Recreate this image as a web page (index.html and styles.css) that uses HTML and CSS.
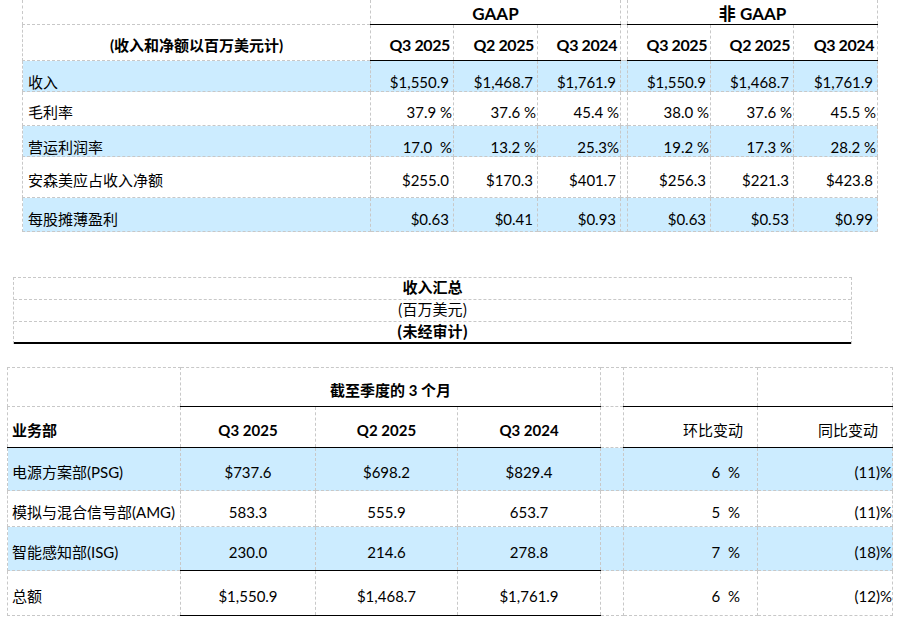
FILE: index.html
```html
<!DOCTYPE html>
<html lang="zh-CN">
<head>
<meta charset="utf-8">
<title>财务摘要</title>
<link rel="stylesheet" href="styles.css">
</head>
<body>
<table class="fin">
  <colgroup>
    <col class="w348"><col class="w83"><col class="w84"><col class="w83"><col class="w7"><col class="w83"><col class="w83"><col class="w84">
  </colgroup>
  <tr class="fr-top">
    <td class="lbl"></td>
    <td class="grp" colspan="3">GAAP</td>
    <td class="gap"></td>
    <td class="grp" colspan="3">非 GAAP</td>
  </tr>
  <tr class="fr-head">
    <td class="hlabel">(收入和净额以百万美元计)</td>
    <td class="qh">Q3 2025</td><td class="qh">Q2 2025</td><td class="qh">Q3 2024</td>
    <td class="gap"></td>
    <td class="qh">Q3 2025</td><td class="qh">Q2 2025</td><td class="qh">Q3 2024</td>
  </tr>
  <tr class="fr-1 blue">
    <td class="lbl">收入</td>
    <td>$1,550.9</td><td>$1,468.7</td><td>$1,761.9</td>
    <td class="gap"></td>
    <td>$1,550.9</td><td>$1,468.7</td><td>$1,761.9</td>
  </tr>
  <tr class="fr-2">
    <td class="lbl">毛利率</td>
    <td class="pct">37.9 %</td><td class="pct">37.6 %</td><td class="pct">45.4 %</td>
    <td class="gap"></td>
    <td class="pct">38.0 %</td><td class="pct">37.6 %</td><td class="pct">45.5 %</td>
  </tr>
  <tr class="fr-3 blue">
    <td class="lbl">营运利润率</td>
    <td class="pct">17.0  %</td><td class="pct">13.2 %</td><td class="pct">25.3%</td>
    <td class="gap"></td>
    <td class="pct">19.2 %</td><td class="pct">17.3 %</td><td class="pct">28.2 %</td>
  </tr>
  <tr class="fr-4">
    <td class="lbl">安森美应占收入净额</td>
    <td>$255.0</td><td>$170.3</td><td>$401.7</td>
    <td class="gap"></td>
    <td>$256.3</td><td>$221.3</td><td>$423.8</td>
  </tr>
  <tr class="fr-5 blue">
    <td class="lbl">每股摊薄盈利</td>
    <td>$0.63</td><td>$0.41</td><td>$0.93</td>
    <td class="gap"></td>
    <td>$0.63</td><td>$0.53</td><td>$0.99</td>
  </tr>
</table>

<div class="summary">
  <div class="sum-row bold">收入汇总</div>
  <div class="sum-row">(百万美元)</div>
  <div class="sum-row bold last">(未经审计)</div>
</div>

<table class="seg">
  <colgroup>
    <col class="w173"><col class="w135"><col class="w142"><col class="w143"><col class="w23"><col class="w134"><col class="w135">
  </colgroup>
  <tr class="sr-a">
    <td class="slbl"></td>
    <td class="period" colspan="3">截至季度的 3 个月</td>
    <td class="gap"></td>
    <td class="chg underline"></td>
    <td class="chg underline"></td>
  </tr>
  <tr class="sr-b">
    <td class="slbl bold underline">业务部</td>
    <td class="qc bold underline">Q3 2025</td>
    <td class="qc bold underline">Q2 2025</td>
    <td class="qc bold underline">Q3 2024</td>
    <td class="gap"></td>
    <td class="chg chgh underline">环比变动</td>
    <td class="chg chgh underline">同比变动</td>
  </tr>
  <tr class="sr-1 blue">
    <td class="slbl">电源方案部(PSG)</td>
    <td class="qc">$737.6</td><td class="qc">$698.2</td><td class="qc">$829.4</td>
    <td class="gap"></td>
    <td class="chg">6  %</td><td class="chg yoy">(11)%</td>
  </tr>
  <tr class="sr-2">
    <td class="slbl">模拟与混合信号部(AMG)</td>
    <td class="qc">583.3</td><td class="qc">555.9</td><td class="qc">653.7</td>
    <td class="gap"></td>
    <td class="chg">5  %</td><td class="chg yoy">(11)%</td>
  </tr>
  <tr class="sr-3 blue">
    <td class="slbl">智能感知部(ISG)</td>
    <td class="qc">230.0</td><td class="qc">214.6</td><td class="qc">278.8</td>
    <td class="gap"></td>
    <td class="chg">7  %</td><td class="chg yoy">(18)%</td>
  </tr>
  <tr class="sr-4">
    <td class="slbl">总额</td>
    <td class="qc total">$1,550.9</td><td class="qc total">$1,468.7</td><td class="qc total">$1,761.9</td>
    <td class="gap"></td>
    <td class="chg">6  %</td><td class="chg yoy">(12)%</td>
  </tr>
</table>
</body>
</html>
```
FILE: styles.css
```css
body {
  margin: 0;
  background: #fff;
  color: #000;
  font-family: Lato, "Noto Sans CJK SC", sans-serif;
  font-size: 15px;
}

table {
  border-collapse: collapse;
  table-layout: fixed;
}

td {
  border: 1px dashed #c8c8c8;
  padding: 0 4px;
  line-height: 18px;
  white-space: pre;
  overflow: visible;
}

.blue td { background: #ccecff; }
.bold { font-weight: bold; }

/* column widths */
.w348 { width: 348px; }
.w83 { width: 83px; }
.w84 { width: 84px; }
.w7 { width: 7px; }
.w173 { width: 173px; }
.w135 { width: 135px; }
.w142 { width: 142px; }
.w143 { width: 143px; }
.w23 { width: 23px; }
.w134 { width: 134px; }

/* ---------- top financial table ---------- */
.fin {
  width: 855px;
  margin-left: 22px;
}

.fin td {
  text-align: right;
  vertical-align: bottom;
}

.fin .gap { padding: 0; }
.fin .lbl { text-align: left; padding-left: 5px; }
.fin .pct { padding-right: 1px; }

.fr-top td { border-top: none; height: 23px; padding-bottom: 1px; }
.fr-top .grp {
  text-align: center;
  font-weight: bold;
  font-size: 17px;
  border-bottom: 1px solid #000;
}

.fr-head td { height: 29px; padding-bottom: 6px; }
.fr-head .hlabel { text-align: center; font-weight: bold; }
.fr-head .qh {
  font-weight: bold;
  font-size: 16px;
  letter-spacing: -0.4px;
  padding-right: 3px;
  border-bottom: 1px solid #000;
}

.fr-1 td { height: 30px; padding-bottom: 0; }
.fr-2 td { height: 29px; padding-bottom: 4px; }
.fr-3 td { height: 30px; padding-bottom: 0; }
.fr-4 td { height: 32px; padding-bottom: 8px; }
.fr-5 td { height: 30px; padding-bottom: 3px; }

/* ---------- summary block ---------- */
.summary {
  width: 837px;
  margin: 45px 0 0 13px;
  border-left: 1px dashed #c8c8c8;
  border-right: 1px dashed #c8c8c8;
  border-top: 1px dashed #c8c8c8;
}

.sum-row {
  height: 21px;
  line-height: 18px;
  text-align: center;
  border-bottom: 1px dashed #c8c8c8;
  font-family: "Noto Sans CJK SC", sans-serif;
}

.sum-row.last {
  border-bottom: 2px solid #000;
  height: 20px;
}

/* ---------- segment table ---------- */
.seg {
  width: 885px;
  margin: 23px 0 0 7px;
}

.seg td {
  vertical-align: middle;
  padding-top: 6px;
}

.seg .gap { padding: 0; }
.seg .slbl { text-align: left; padding-left: 4px; }
.seg .qc { text-align: center; }
.seg .chg { text-align: right; padding-right: 17px; }
.seg .chgh { padding-right: 14px; }
.seg .yoy { padding-right: 0; }
.seg .underline { border-bottom: 1px solid #000; }
.seg .period { text-align: center; font-weight: bold; border-bottom: 1px solid #000; }
.seg .total { border-top: 1px solid #000; border-bottom: 1px solid #000; }

.sr-a td { height: 32px; }
.sr-b td { height: 34px; }
.sr-1 td { height: 36px; }
.sr-2 td { height: 29px; }
.sr-3 td { height: 37px; }
.sr-4 td { height: 38px; }
```
